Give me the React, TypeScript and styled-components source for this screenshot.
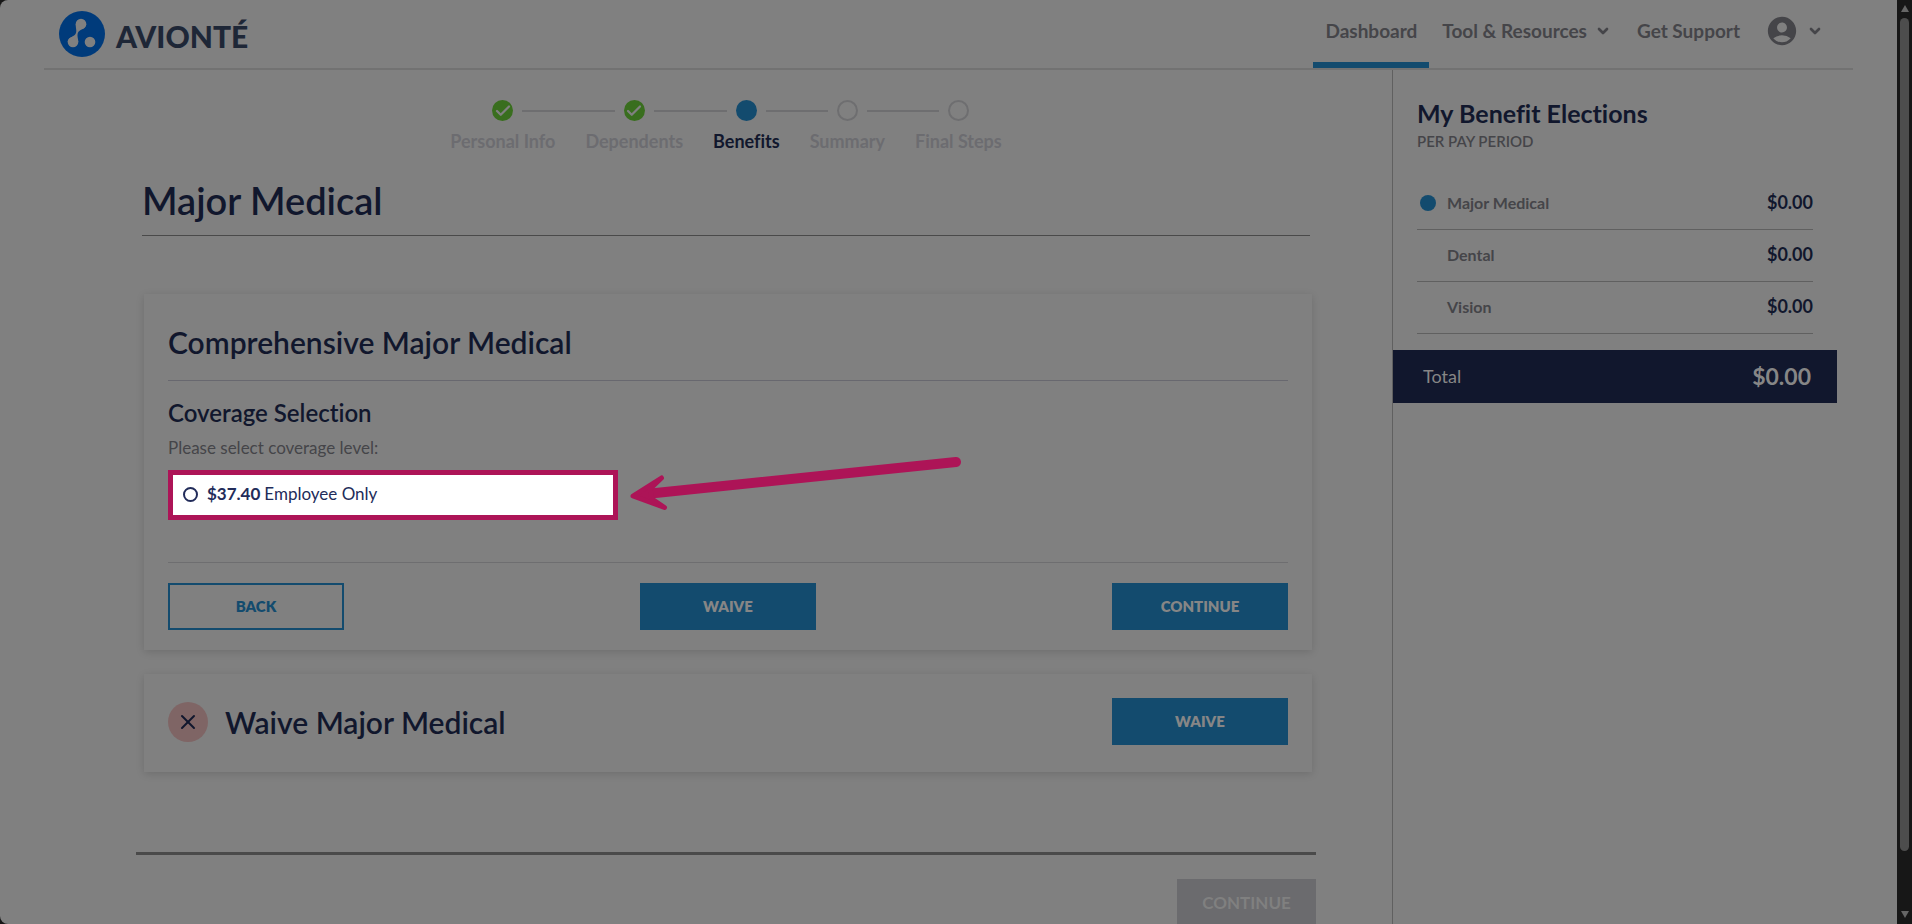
import React from "react";
import styled, { createGlobalStyle, css } from "styled-components";
import { Check, ChevronDown, X } from "lucide-react";
import { MdAccountCircle } from "react-icons/md";

const color = {
  page: "#808080",
  navy: "#11172d",
  blue: "#134b6e",
  green: "#396e1e",
  text: "#454549",
  muted: "#6c6c70",
  line: "#6e6e70",
  accent: "#ad1457",
};

const GlobalStyle = createGlobalStyle`
  *, *::before, *::after { box-sizing: border-box; }
  body {
    margin: 0;
    background: #171717;
    color: ${color.text};
    font-family: Lato, "Open Sans", sans-serif;
    font-size: 16px;
    font-variant-ligatures: none;
  }
  h1, h2, h3, p, ol, ul { margin: 0; padding: 0; }
  ol, ul { list-style: none; }
  button { font-family: inherit; }
`;

const Window = styled.div`
  display: flex;
  height: 100vh;
  overflow: hidden;
`;

const Page = styled.div`
  flex: 1;
  min-width: 0;
  display: flex;
  flex-direction: column;
  background: ${color.page};
  border-radius: 8px 0 0 8px;
  overflow: hidden;
`;

const Header = styled.header`
  flex: none;
  display: flex;
  justify-content: space-between;
  height: 70px;
  margin: 0 44px;
  padding: 0 16px 0 15px;
  border-bottom: 2px solid #727272;
`;

const Brand = styled.a`
  display: flex;
  align-items: center;
  gap: 11px;
  color: #1e2737;
  font-size: 30px;
  font-weight: 900;
  line-height: 40px;
  text-decoration: none;
`;

const BrandName = styled.span`
  padding-top: 4px;
`;

const Nav = styled.nav`
  display: flex;
  align-items: stretch;
  color: ${color.text};
`;

const NavLink = styled.a<{ $active?: boolean }>`
  display: flex;
  align-items: center;
  padding: 0 12px 6px;
  color: inherit;
  font-size: 19px;
  font-weight: 700;
  line-height: 24px;
  text-decoration: none;
  ${({ $active }) =>
    $active &&
    css`
      padding-bottom: 0;
      border-bottom: 6px solid ${color.blue};
    `}
`;

const NavMenu = styled.button`
  display: flex;
  align-items: center;
  gap: 8px;
  padding: 0 14px 6px 13px;
  border: 0;
  background: none;
  color: inherit;
  font-size: 19px;
  font-weight: 700;
  line-height: 24px;
`;

const Body = styled.div`
  flex: 1;
  min-height: 0;
  display: flex;
`;

const Main = styled.main`
  flex: 1;
  min-width: 0;
  padding: 30px 76px 0 136px;
`;

const Steps = styled.ol`
  display: flex;
  justify-content: center;
`;

type StepState = "done" | "current" | "todo";

const Step = styled.li<{ $state: StepState }>`
  display: flex;
  flex-direction: column;
  gap: 8px;
  color: ${({ $state }) => ($state === "current" ? color.navy : color.muted)};
  font-size: 18px;
  font-weight: 700;
  line-height: 24px;
`;

const StepTrack = styled.div`
  display: flex;
  align-items: center;
  gap: 9px;
`;

const StepLine = styled.span<{ $hidden?: boolean }>`
  flex: 1;
  height: 2px;
  background: ${({ $hidden }) => ($hidden ? "none" : color.line)};
`;

const StepMark = styled.span<{ $state: StepState }>`
  display: flex;
  align-items: center;
  justify-content: center;
  width: 21px;
  height: 21px;
  border-radius: 50%;
  color: ${color.page};
  border: ${({ $state }) => ($state === "todo" ? `2px solid ${color.line}` : "0")};
  background: ${({ $state }) =>
    $state === "done" ? color.green : $state === "current" ? color.blue : "none"};
`;

const StepLabel = styled.span`
  padding: 0 15px;
`;

const Title = styled.h1`
  margin: 25px 6px 0;
  padding-bottom: 13px;
  border-bottom: 1px solid #4a4a4a;
  color: ${color.navy};
  font-size: 38px;
  font-weight: 600;
  line-height: 44px;
`;

const Cards = styled.div`
  display: grid;
  gap: 24px;
  margin: 58px 4px 0 8px;
`;

const Card = styled.section`
  padding: 0 24px;
  box-shadow: 0 2px 8px rgba(0, 0, 0, 0.14);
`;

const CardTitle = styled.h2`
  color: ${color.navy};
  font-size: 30px;
  font-weight: 600;
  line-height: 36px;
`;

const CardHead = styled.div`
  padding: 30px 0 20px;
  border-bottom: 1px solid #68686f;
`;

const SubTitle = styled.h3`
  margin-top: 18px;
  color: ${color.navy};
  font-size: 24px;
  font-weight: 600;
  line-height: 28px;
`;

const Hint = styled.p`
  margin: 9px 0 10px;
  font-size: 17px;
  line-height: 24px;
`;

const OptionArea = styled.div`
  position: relative;
  width: 450px;
  margin-bottom: 42px;
`;

const Option = styled.label`
  display: flex;
  align-items: center;
  height: 50px;
  padding: 0 10px 2px;
  border: 5px solid ${color.accent};
  background: #ffffff;
  color: #222c5a;
  font-size: 17px;
  line-height: 24px;
`;

const Radio = styled.input`
  appearance: none;
  width: 15px;
  height: 15px;
  margin: 0 9px 0 0;
  border: 2px solid #222c5a;
  border-radius: 50%;
  background: #ffffff;
`;

const Price = styled.strong`
  margin-right: 4px;
  font-weight: 700;
`;

const Pointer = styled.svg`
  position: absolute;
  left: calc(100% + 8px);
  top: -20px;
`;

const Actions = styled.div`
  display: flex;
  justify-content: space-between;
  padding: 20px 0;
  border-top: 1px solid ${color.line};
`;

const Button = styled.button<{ $outline?: boolean }>`
  width: 176px;
  height: 47px;
  padding: 0 0 2px;
  border: 2px solid ${color.blue};
  background: ${({ $outline }) => ($outline ? "transparent" : color.blue)};
  color: ${({ $outline }) => ($outline ? color.blue : "#868686")};
  font-size: 15px;
  font-weight: 800;
  line-height: 20px;
`;

const WaiveRow = styled.div`
  display: flex;
  align-items: center;
  gap: 17px;
  height: 98px;
  padding-bottom: 3px;

  ${Button} {
    margin-left: auto;
  }
`;

const RoundIcon = styled.span`
  display: flex;
  align-items: center;
  justify-content: center;
  width: 40px;
  height: 40px;
  border-radius: 50%;
  background: #7f6565;
  color: ${color.navy};
`;

const Footer = styled.div`
  display: flex;
  justify-content: flex-end;
  margin-top: 80px;
  padding-top: 24px;
  border-top: 3px solid #4a4a4a;
`;

const FooterButton = styled.button`
  width: 139px;
  height: 48px;
  padding: 0;
  border: 0;
  background: #6b6b6e;
  color: #808080;
  font-size: 17px;
  font-weight: 700;
  line-height: 24px;
`;

const Sidebar = styled.aside`
  flex: none;
  width: 505px;
  padding: 27px 60px 0 0;
  border-left: 1px solid #606060;
`;

const SideContent = styled.div`
  padding: 0 24px;
`;

const SideTitle = styled.h2`
  color: ${color.navy};
  font-size: 25px;
  font-weight: 700;
  line-height: 32px;
`;

const SideCaption = styled.p`
  font-size: 15px;
  font-weight: 600;
  line-height: 24px;
`;

const Elections = styled.table`
  width: 100%;
  margin: 24px 0 16px;
  border-collapse: collapse;
`;

const ElectionRow = styled.tr`
  height: 52px;
  border-bottom: 1px solid #606060;
`;

const ElectionName = styled.th`
  padding: 0;
  text-align: left;
  font-size: 16px;
  font-weight: 700;
  line-height: 24px;
`;

const ElectionLabel = styled.span`
  display: flex;
  align-items: center;
  gap: 11px;
  padding-left: 3px;
`;

const Dot = styled.span<{ $on?: boolean }>`
  width: 16px;
  height: 16px;
  border-radius: 50%;
  background: ${({ $on }) => ($on ? color.blue : "none")};
`;

const ElectionPrice = styled.td`
  padding: 0 0 2px;
  text-align: right;
  color: ${color.navy};
  font-size: 18px;
  font-weight: 700;
  line-height: 24px;
`;

const Total = styled.div`
  display: flex;
  align-items: center;
  justify-content: space-between;
  height: 53px;
  padding: 0 26px 0 30px;
  background: ${color.navy};
  color: #868686;
  font-size: 18px;
  line-height: 24px;
`;

const TotalPrice = styled.span`
  font-size: 23px;
  font-weight: 700;
`;

const ScrollBar = styled.div`
  flex: none;
  display: flex;
  flex-direction: column;
  align-items: center;
  gap: 6px;
  width: 15px;
  padding: 5px 0 6px;
`;

const ScrollThumb = styled.div`
  width: 9px;
  flex: 1;
  margin-bottom: 54px;
  border-radius: 5px;
  background: #4d4d4d;
`;

const ScrollArrow = styled.span<{ $down?: boolean }>`
  border: 4px solid transparent;
  ${({ $down }) =>
    $down
      ? css`
          border-top: 7px solid #666666;
          border-bottom: 0;
        `
      : css`
          border-bottom: 7px solid #666666;
          border-top: 0;
        `}
`;

const steps: { label: string; state: StepState }[] = [
  { label: "Personal Info", state: "done" },
  { label: "Dependents", state: "done" },
  { label: "Benefits", state: "current" },
  { label: "Summary", state: "todo" },
  { label: "Final Steps", state: "todo" },
];

const elections = ["Major Medical", "Dental", "Vision"];

const Logo = () => (
  <svg width="46" height="46" viewBox="0 0 46 46" aria-hidden="true">
    <circle cx="23" cy="23" r="23" fill="#003b7b" />
    <g fill={color.page}>
      <circle cx="22" cy="13" r="5.3" />
      <circle cx="14" cy="31" r="5.3" />
      <circle cx="31" cy="31" r="5.3" />
      <path d="M16.700 13C16.700 18 18.200 20 16.500 23C15 25.500 8.700 27 8.700 31L19.300 31C19.300 28 17.800 25 18.800 22C20 18.500 27.300 17.500 27.300 13z" />
    </g>
  </svg>
);

export default function App() {
  return (
    <Window>
      <GlobalStyle />
      <Page>
        <Header>
          <Brand href="#home">
            <Logo />
            <BrandName>AVIONTÉ</BrandName>
          </Brand>
          <Nav>
            <NavLink href="#dashboard" $active>
              Dashboard
            </NavLink>
            <NavMenu type="button">
              Tool &amp; Resources
              <ChevronDown size={16} strokeWidth={4} />
            </NavMenu>
            <NavLink href="#support">Get Support</NavLink>
            <NavMenu type="button" aria-label="Account">
              <MdAccountCircle size={34} />
              <ChevronDown size={16} strokeWidth={4} />
            </NavMenu>
          </Nav>
        </Header>
        <Body>
          <Main>
            <Steps>
              {steps.map(({ label, state }, i) => (
                <Step key={label} $state={state}>
                  <StepTrack>
                    <StepLine $hidden={i === 0} />
                    <StepMark $state={state}>
                      {state === "done" && <Check size={18} strokeWidth={3} />}
                    </StepMark>
                    <StepLine $hidden={i === steps.length - 1} />
                  </StepTrack>
                  <StepLabel>{label}</StepLabel>
                </Step>
              ))}
            </Steps>
            <Title>Major Medical</Title>
            <Cards>
              <Card>
                <CardHead>
                  <CardTitle>Comprehensive Major Medical</CardTitle>
                </CardHead>
                <SubTitle>Coverage Selection</SubTitle>
                <Hint>Please select coverage level:</Hint>
                <OptionArea>
                  <Option>
                    <Radio type="radio" name="coverage" />
                    <Price>$37.40</Price>
                    Employee Only
                  </Option>
                  <Pointer width="340" height="72" viewBox="0 0 340 72" aria-hidden="true">
                    <path
                      d="M330 12L20 44"
                      stroke={color.accent}
                      strokeWidth="10"
                      strokeLinecap="round"
                    />
                    <path
                      d="M7 46L35.500 28 24 39l2 10L38.500 57.500z"
                      fill={color.accent}
                      stroke={color.accent}
                      strokeWidth="5"
                      strokeLinejoin="round"
                    />
                  </Pointer>
                </OptionArea>
                <Actions>
                  <Button type="button" $outline>
                    BACK
                  </Button>
                  <Button type="button">WAIVE</Button>
                  <Button type="button">CONTINUE</Button>
                </Actions>
              </Card>
              <Card>
                <WaiveRow>
                  <RoundIcon>
                    <X size={24} strokeWidth={2} />
                  </RoundIcon>
                  <CardTitle>Waive Major Medical</CardTitle>
                  <Button type="button">WAIVE</Button>
                </WaiveRow>
              </Card>
            </Cards>
            <Footer>
              <FooterButton type="button" disabled>
                CONTINUE
              </FooterButton>
            </Footer>
          </Main>
          <Sidebar>
            <SideContent>
              <SideTitle>My Benefit Elections</SideTitle>
              <SideCaption>PER PAY PERIOD</SideCaption>
              <Elections>
                <tbody>
                  {elections.map((name, i) => (
                    <ElectionRow key={name}>
                      <ElectionName scope="row">
                        <ElectionLabel>
                          <Dot $on={i === 0} />
                          {name}
                        </ElectionLabel>
                      </ElectionName>
                      <ElectionPrice>$0.00</ElectionPrice>
                    </ElectionRow>
                  ))}
                </tbody>
              </Elections>
            </SideContent>
            <Total>
              Total
              <TotalPrice>$0.00</TotalPrice>
            </Total>
          </Sidebar>
        </Body>
      </Page>
      <ScrollBar aria-hidden="true">
        <ScrollArrow />
        <ScrollThumb />
        <ScrollArrow $down />
      </ScrollBar>
    </Window>
  );
}
